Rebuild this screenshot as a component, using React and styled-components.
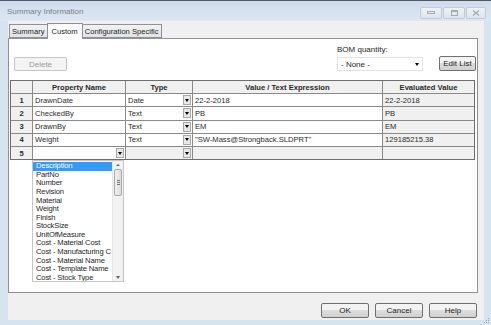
import styled, { createGlobalStyle } from "styled-components";

const GlobalStyle = createGlobalStyle`
  body {
    margin: 0;
    background: #ffffff;
    font-family: "Liberation Sans", Arial, sans-serif;
    font-size: 8px;
    color: #1e1e1e;
  }
`;

const Window = styled.div`
  width: 491px;
  height: 325px;
  display: flex;
  flex-direction: column;
  background: #d8e3f0;
  border-top: 1px solid #505860;
  box-sizing: border-box;
  overflow: hidden;
`;

const TitleBar = styled.div`
  height: 20px;
  flex: none;
  display: flex;
  align-items: center;
  padding: 0 5px 0 7px;
  background: linear-gradient(#cfdcec, #dde7f3);
`;

const TitleText = styled.div`
  flex: 1;
  color: #7a8088;
  font-size: 8px;
`;

const CaptionButtons = styled.div`
  display: flex;
  gap: 1px;
  align-self: flex-start;
  margin-top: 6px;
`;

const CaptionButton = styled.div`
  width: ${(p) => p.$w}px;
  height: 10px;
  border: 1px solid #c3cad4;
  border-radius: 2px;
  background: linear-gradient(#eef2f6, #dfe5ec);
  display: flex;
  align-items: center;
  justify-content: center;
`;

const Frame = styled.div`
  flex: 1;
  display: flex;
  padding: 0 7px 5px 8px;
`;

const Client = styled.div`
  flex: 1;
  display: flex;
  flex-direction: column;
  background: #f0f0f0;
  padding-top: 2px;
`;

const TabStrip = styled.div`
  display: flex;
  align-items: flex-end;
  height: 15px;
  padding-left: 1px;
`;

const Tab = styled.div`
  height: ${(p) => (p.$active ? 16 : 14)}px;
  margin-bottom: ${(p) => (p.$active ? -1 : 0)}px;
  padding: 0 ${(p) => (p.$active ? 4 : 2)}px;
  box-sizing: border-box;
  display: flex;
  align-items: center;
  font-size: 7.6px;
  border: 1px solid #8d929a;
  border-bottom: ${(p) => (p.$active ? "none" : "1px solid #8d929a")};
  margin-left: ${(p) => (p.$first ? 0 : -1)}px;
  background: ${(p) =>
    p.$active ? "#ffffff" : "linear-gradient(#f2f2f2, #e3e3e3)"};
  position: relative;
  z-index: ${(p) => (p.$active ? 1 : 0)};
  color: #1e1e1e;
`;

const Panel = styled.div`
  height: 253px;
  margin-right: 6px;
  border: 1px solid #8d929a;
  background: #ffffff;
  display: flex;
  flex-direction: column;
`;

const TopBar = styled.div`
  height: 32px;
  display: flex;
  align-items: flex-end;
  padding: 0 1px 0 5px;
`;

const Button = styled.div`
  width: ${(p) => p.$w}px;
  height: ${(p) => p.$h || 14}px;
  box-sizing: border-box;
  border: 1px solid ${(p) => (p.$disabled ? "#c2c6ca" : "#707070")};
  border-radius: 2px;
  background: ${(p) =>
    p.$disabled ? "#f4f4f4" : "linear-gradient(#f3f3f3 45%, #dddddd 50%, #d0d0d0)"};
  color: ${(p) => (p.$disabled ? "#9a9a9a" : "#1e1e1e")};
  display: flex;
  align-items: center;
  justify-content: center;
`;

const Spacer = styled.div`
  flex: 1;
`;

const BomGroup = styled.div`
  display: flex;
  flex-direction: column;
  gap: 3px;
  margin-right: 16px;
`;

const BomLabel = styled.div`
  color: #1e1e1e;
`;

const Combo = styled.div`
  width: 86px;
  height: 14px;
  box-sizing: border-box;
  border: 1px solid #e2e3ea;
  display: flex;
  align-items: center;
  padding: 0 3px 0 3px;
  color: #1e1e1e;
`;

const ComboText = styled.div`
  flex: 1;
`;

const Triangle = styled.div`
  width: 0;
  height: 0;
  border-left: 2.5px solid transparent;
  border-right: 2.5px solid transparent;
  border-top: 3px solid ${(p) => p.$color || "#000"};
`;

const TableWrap = styled.div`
  position: relative;
  margin: 9px 0 0 1px;
  width: 465px;
`;

const Grid = styled.div`
  display: grid;
  grid-template-columns: 21px 92px 66px 189px 91px;
  grid-auto-rows: 12.2px;
  gap: 1px;
  background: #8a8a8a;
  border: 1px solid #6e6e6e;
`;

const HeadCell = styled.div`
  background: #f0f0f0;
  font-weight: bold;
  font-size: 7.6px;
  display: flex;
  align-items: center;
  justify-content: center;
  color: #2a2a2a;
`;

const NumCell = styled(HeadCell)``;

const Cell = styled.div`
  background: ${(p) => (p.$shade ? "#f0f0f0" : "#ffffff")};
  display: flex;
  align-items: center;
  padding-left: 2px;
  white-space: nowrap;
  overflow: hidden;
  color: #2a2a2a;
  font-size: 7.6px;
`;

const CellText = styled.div`
  flex: 1;
`;

const DropBtn = styled.div`
  width: 8px;
  height: 10px;
  margin-right: 1px;
  box-sizing: border-box;
  border: 1px solid #a8a8a8;
  background: #e8e8e8;
  display: flex;
  align-items: center;
  justify-content: center;
`;

const List = styled.div`
  position: absolute;
  top: 100%;
  left: 22px;
  width: 92px;
  height: 122px;
  box-sizing: border-box;
  border: 1px solid #c6c6c6;
  background: #ffffff;
  display: flex;
`;

const ListItems = styled.div`
  flex: 1;
  padding-top: 1px;
  overflow: hidden;
`;

const ListItem = styled.div`
  height: 8.6px;
  line-height: 8.6px;
  font-size: 7.6px;
  letter-spacing: -0.15px;
  padding-left: 3px;
  white-space: nowrap;
  background: ${(p) => (p.$selected ? "#3399ff" : "transparent")};
  color: ${(p) => (p.$selected ? "#ffffff" : "#1e1e1e")};
`;

const ScrollBar = styled.div`
  width: 10px;
  background: #f2f2f2;
  border-left: 1px solid #e6e6e6;
  display: flex;
  flex-direction: column;
  align-items: center;
`;

const ScrollArrow = styled.div`
  height: 8px;
  display: flex;
  align-items: center;
  justify-content: center;
`;

const UpTriangle = styled.div`
  width: 0;
  height: 0;
  border-left: 2px solid transparent;
  border-right: 2px solid transparent;
  border-bottom: 2.5px solid #606060;
`;

const ScrollThumb = styled.div`
  width: 8px;
  height: 27px;
  box-sizing: border-box;
  border: 1px solid #a9a9a9;
  border-radius: 2px;
  background: linear-gradient(90deg, #f0f0f0, #dcdcdc);
  display: flex;
  flex-direction: column;
  align-items: center;
  justify-content: center;
  gap: 1px;
`;

const Grip = styled.div`
  width: 3px;
  height: 1px;
  background: #777;
`;

const ScrollTrack = styled.div`
  flex: 1;
`;

const Footer = styled.div`
  flex: 1;
  display: flex;
  justify-content: flex-end;
  align-items: flex-start;
  gap: 6px;
  padding: 10px 7px 0 0;
  position: relative;
`;

const SizeGrip = styled.svg`
  position: absolute;
  right: -6px;
  bottom: -4px;
`;

const rows = [
  { n: 1, name: "DrawnDate", type: "Date", value: "22-2-2018", evald: "22-2-2018" },
  { n: 2, name: "CheckedBy", type: "Text", value: "PB", evald: "PB" },
  { n: 3, name: "DrawnBy", type: "Text", value: "EM", evald: "EM" },
  {
    n: 4,
    name: "Weight",
    type: "Text",
    value: "\"SW-Mass@Strongback.SLDPRT\"",
    evald: "129185215.38",
  },
];

// the list is cut at its scrollbar in the screenshot, so the long entry shows only "C"
const options = [
  "Description",
  "PartNo",
  "Number",
  "Revision",
  "Material",
  "Weight",
  "Finish",
  "StockSize",
  "UnitOfMeasure",
  "Cost - Material Cost",
  "Cost - Manufacturing C",
  "Cost - Material Name",
  "Cost - Template Name",
  "Cost - Stock Type",
];

export default function App() {
  return (
    <>
      <GlobalStyle />
      <Window>
        <TitleBar>
          <TitleText>Summary Information</TitleText>
          <CaptionButtons>
            <CaptionButton $w={20}>
              <svg width="8" height="4">
                <rect x="0.5" y="0.5" width="7" height="2" fill="none" stroke="#a3acb6" />
              </svg>
            </CaptionButton>
            <CaptionButton $w={20}>
              <svg width="7" height="6">
                <rect x="0.5" y="0.5" width="6" height="5" fill="none" stroke="#a3acb6" />
                <line x1="0.5" y1="1.5" x2="6.5" y2="1.5" stroke="#a3acb6" />
              </svg>
            </CaptionButton>
            <CaptionButton $w={18}>
              <svg width="8" height="6">
                <path d="M1 0.5 L7 5.5 M7 0.5 L1 5.5" stroke="#a3acb6" strokeWidth="1.3" />
              </svg>
            </CaptionButton>
          </CaptionButtons>
        </TitleBar>
        <Frame>
          <Client>
            <TabStrip>
              <Tab $first>Summary</Tab>
              <Tab $active>Custom</Tab>
              <Tab>Configuration Specific</Tab>
            </TabStrip>
            <Panel>
              <TopBar>
                <Button $w={53} $disabled>
                  Delete
                </Button>
                <Spacer />
                <BomGroup>
                  <BomLabel>BOM quantity:</BomLabel>
                  <Combo>
                    <ComboText>- None -</ComboText>
                    <Triangle />
                  </Combo>
                </BomGroup>
                <Button $w={37} $h={15}>
                  Edit List
                </Button>
              </TopBar>
              <TableWrap>
                <Grid>
                  <HeadCell />
                  <HeadCell>Property Name</HeadCell>
                  <HeadCell>Type</HeadCell>
                  <HeadCell>Value / Text Expression</HeadCell>
                  <HeadCell>Evaluated Value</HeadCell>
                  {rows.map((r) => [
                    <NumCell key={`n${r.n}`}>{r.n}</NumCell>,
                    <Cell key={`a${r.n}`}>{r.name}</Cell>,
                    <Cell key={`t${r.n}`}>
                      <CellText>{r.type}</CellText>
                      <DropBtn>
                        <Triangle />
                      </DropBtn>
                    </Cell>,
                    <Cell key={`v${r.n}`}>{r.value}</Cell>,
                    <Cell key={`e${r.n}`} $shade>
                      {r.evald}
                    </Cell>,
                  ])}
                  <NumCell>5</NumCell>
                  <Cell>
                    <CellText />
                    <DropBtn>
                      <Triangle />
                    </DropBtn>
                  </Cell>
                  <Cell $shade>
                    <CellText />
                    <DropBtn>
                      <Triangle />
                    </DropBtn>
                  </Cell>
                  <Cell $shade />
                  <Cell $shade />
                </Grid>
                <List>
                  <ListItems>
                    {options.map((o, i) => (
                      <ListItem key={o} $selected={i === 0}>
                        {o}
                      </ListItem>
                    ))}
                  </ListItems>
                  <ScrollBar>
                    <ScrollArrow>
                      <UpTriangle />
                    </ScrollArrow>
                    <ScrollThumb>
                      <Grip />
                      <Grip />
                      <Grip />
                    </ScrollThumb>
                    <ScrollTrack />
                    <ScrollArrow>
                      <Triangle $color="#606060" />
                    </ScrollArrow>
                  </ScrollBar>
                </List>
              </TableWrap>
            </Panel>
            <Footer>
              <Button $w={48} $h={15}>
                OK
              </Button>
              <Button $w={48} $h={15}>
                Cancel
              </Button>
              <Button $w={48} $h={15}>
                Help
              </Button>
              <SizeGrip width="7" height="7">
                <rect x="5" y="1" width="1" height="1" fill="#9aa3ad" />
                <rect x="3" y="3" width="1" height="1" fill="#9aa3ad" />
                <rect x="5" y="3" width="1" height="1" fill="#9aa3ad" />
                <rect x="1" y="5" width="1" height="1" fill="#9aa3ad" />
                <rect x="3" y="5" width="1" height="1" fill="#9aa3ad" />
                <rect x="5" y="5" width="1" height="1" fill="#9aa3ad" />
              </SizeGrip>
            </Footer>
          </Client>
        </Frame>
      </Window>
    </>
  );
}
